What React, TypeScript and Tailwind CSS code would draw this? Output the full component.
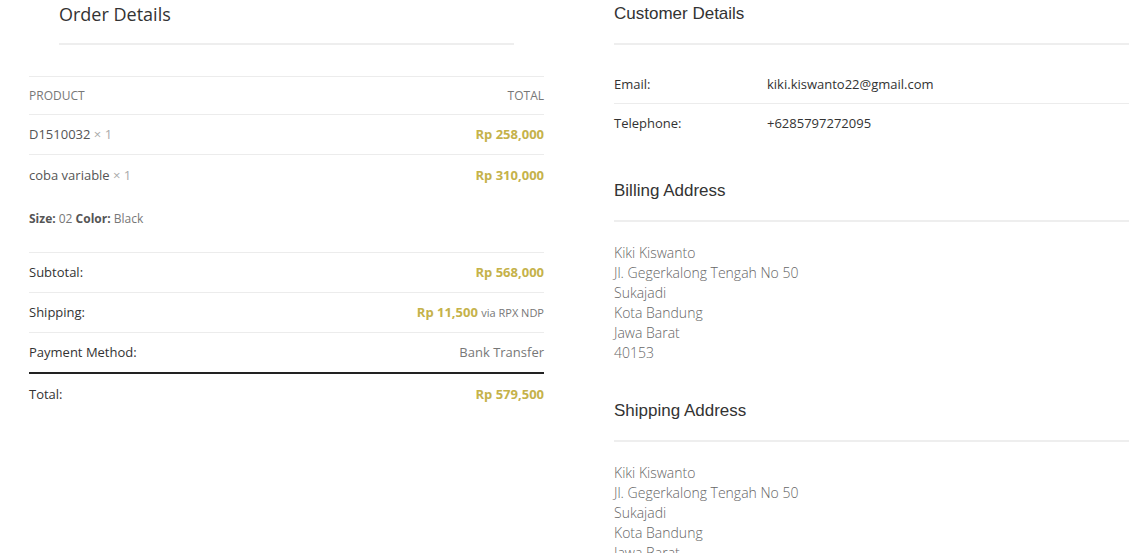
import React from "react";

const gold = "text-[#c5b24a]";

function Row({ label, right, border = "border-b border-[#ececec]", h = "h-[40px]" }: { label: React.ReactNode; right: React.ReactNode; border?: string; h?: string }) {
  return (
    <div className={`flex ${h} items-center justify-between pt-[1px] ${border}`}>
      <div className="text-[13px] text-[#333]">{label}</div>
      <div className="text-[13px]">{right}</div>
    </div>
  );
}

function Address() {
  return (
    <div className="mt-[21px] text-[14px] leading-[20px] font-light text-[#666]">
      <div>Kiki Kiswanto</div>
      <div>Jl. Gegerkalong Tengah No 50</div>
      <div>Sukajadi</div>
      <div>Kota Bandung</div>
      <div>Jawa Barat</div>
      <div>40153</div>
    </div>
  );
}

export default function App() {
  return (
    <div className="flex h-[553px] w-[1142px] overflow-hidden bg-white pl-[29px]" style={{ fontFamily: '"Open Sans", "Noto Sans", sans-serif' }}>
      <div className="w-[515px] shrink-0">
        <div className="mx-[30px] border-b-2 border-[#eeeeee] pb-[15px] text-[18px] leading-[28px] text-[#333]">Order Details</div>
        <div className="mt-[31px] border-t border-[#ececec]">
          <div className="flex h-[38px] items-center justify-between border-b border-[#ececec] text-[12px] uppercase text-[#777]">
            <span>Product</span>
            <span>Total</span>
          </div>
          <Row
            label={<span className="text-[#555]">D1510032 <span className="text-[#aaa]">× 1</span></span>}
            right={<span className={`font-bold ${gold}`}>Rp 258,000</span>}
          />
          <div className="border-b border-[#ececec] pt-[10px] pb-[23px]">
            <div className="flex items-center justify-between leading-[20px]">
              <span className="text-[13px] text-[#555]">coba variable <span className="text-[#aaa]">× 1</span></span>
              <span className={`text-[13px] font-bold ${gold}`}>Rp 310,000</span>
            </div>
            <div className="mt-[24px] text-[12px] leading-[20px] text-[#777]">
              <span className="font-bold text-[#555]">Size:</span> 02 <span className="font-bold text-[#555]">Color:</span> Black
            </div>
          </div>
          <Row label="Subtotal:" right={<span className={`font-bold ${gold}`}>Rp 568,000</span>} />
          <Row
            label="Shipping:"
            right={<span><span className={`font-bold ${gold}`}>Rp 11,500</span> <span className="text-[11px] text-[#777]">via RPX NDP</span></span>}
          />
          <Row label="Payment Method:" right={<span className="text-[#777]">Bank Transfer</span>} border="border-b-2 border-[#222]" h="h-[41px]" />
          <Row label="Total:" right={<span className={`font-bold ${gold}`}>Rp 579,500</span>} border="" />
        </div>
      </div>
      <div className="ml-[70px] w-[515px] shrink-0">
        <div className="border-b-2 border-[#eeeeee] pb-[15px] text-[17px] leading-[28px] text-[#333]" style={{ fontFamily: '"Liberation Sans", Arial, sans-serif' }}>
          Customer Details
        </div>
        <div className="mt-[20px] text-[13px] text-[#333]">
          <div className="flex h-[39px] items-center border-b border-[#ececec] pt-[1px]">
            <span className="w-[153px]">Email:</span>
            <span>kiki.kiswanto22@gmail.com</span>
          </div>
          <div className="flex h-[39px] items-center pt-[1px]">
            <span className="w-[153px]">Telephone:</span>
            <span>+6285797272095</span>
          </div>
        </div>
        <div className="mt-[34px] border-b-2 border-[#eeeeee] pb-[15px] text-[17px] leading-[28px] text-[#333]" style={{ fontFamily: '"Liberation Sans", Arial, sans-serif' }}>
          Billing Address
        </div>
        <Address />
        <div className="mt-[34px] border-b-2 border-[#eeeeee] pb-[15px] text-[17px] leading-[28px] text-[#333]" style={{ fontFamily: '"Liberation Sans", Arial, sans-serif' }}>
          Shipping Address
        </div>
        <Address />
      </div>
    </div>
  );
}
